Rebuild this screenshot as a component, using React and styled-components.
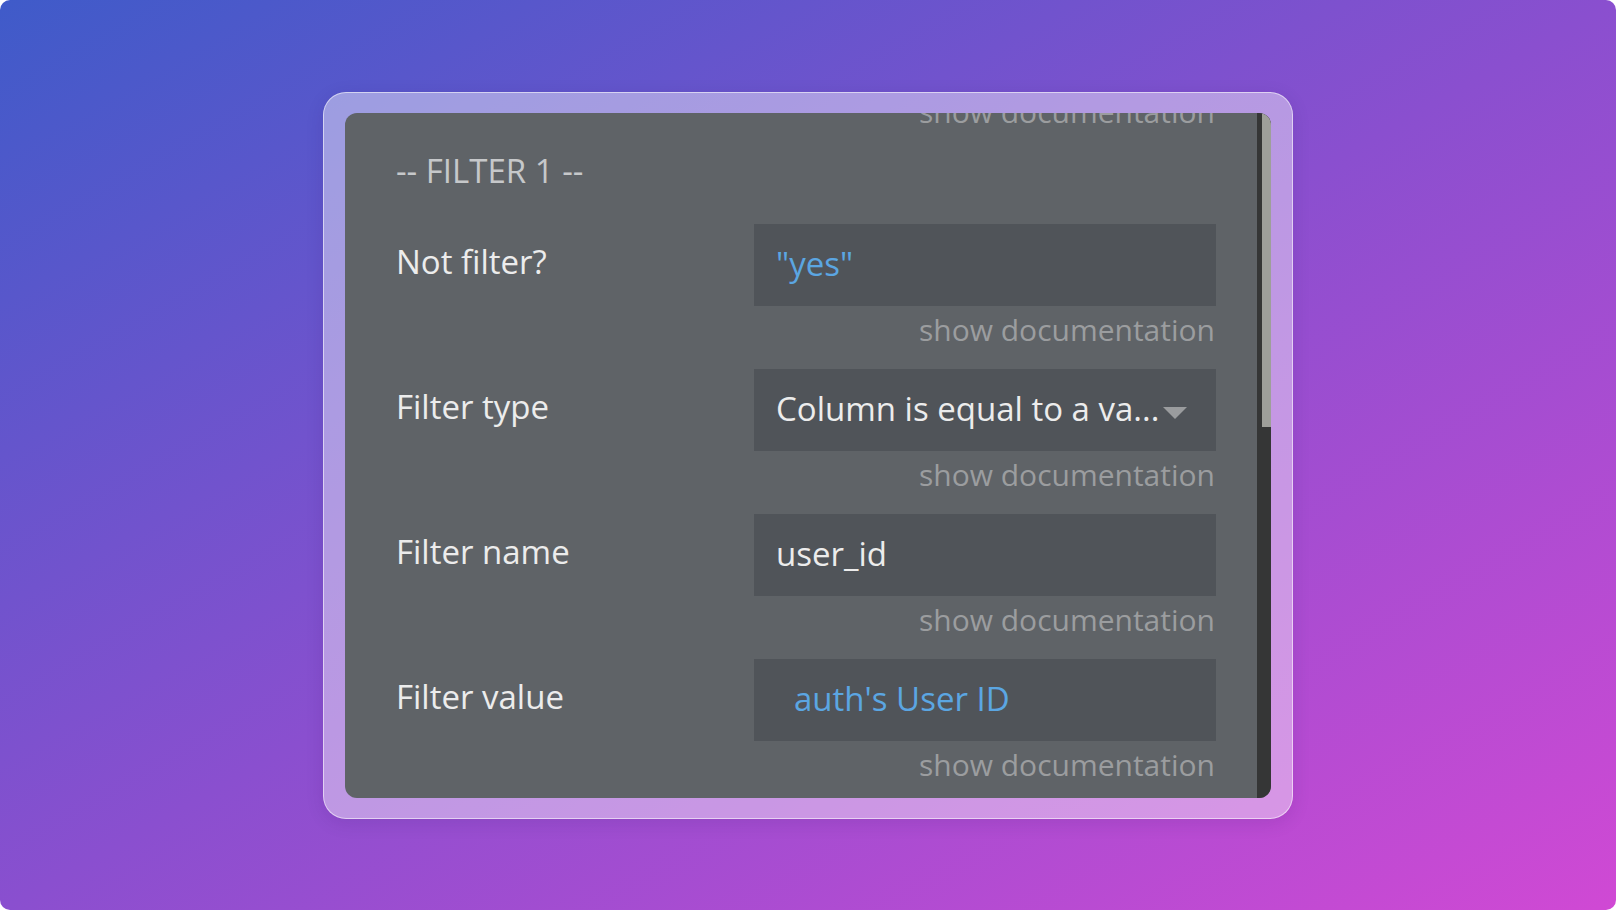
import React from 'react';
import styled, { createGlobalStyle } from 'styled-components';

const GlobalStyle = createGlobalStyle`
  html, body {
    margin: 0;
    padding: 0;
    background: #ffffff;
  }
  * { box-sizing: border-box; }
`;

const Page = styled.div`
  width: 1616px;
  height: 910px;
  border-radius: 10px;
  overflow: hidden;
  background: linear-gradient(to bottom right, #3f5bc9 0%, #8a4fcf 50%, #d049d4 100%);
  display: flex;
  align-items: center;
  justify-content: center;
  font-family: "Open Sans", "Liberation Sans", sans-serif;
`;

const Frame = styled.div`
  width: 970px;
  height: 727px;
  padding: 20px 21px 20px 21px;
  border-radius: 23px;
  background: rgba(255, 255, 255, 0.42);
  border: 1.5px solid rgba(255, 255, 255, 0.55);
  box-shadow: 0 4px 18px rgba(40, 20, 90, 0.12);
`;

const Panel = styled.div`
  width: 100%;
  height: 100%;
  border-radius: 12px;
  background: #5f6367;
  overflow: hidden;
  display: flex;
`;

const Content = styled.div`
  flex: 1;
  overflow: hidden;
  padding: 0 41px 0 51px;
`;

const Scroller = styled.div`
  margin-top: -25px;
`;

const Track = styled.div`
  width: 14px;
  height: 100%;
  background: #353636;
  display: flex;
  justify-content: flex-end;
`;

const Thumb = styled.div`
  width: 9px;
  height: 314px;
  background: #9e9f9a;
`;

const Header = styled.div`
  margin: 17px 0 31px;
  font-size: 33px;
  line-height: 44px;
  color: #c6c8ca;
`;

const Field = styled.div`
  margin-bottom: 19px;
`;

const Row = styled.div`
  display: flex;
  align-items: center;
  height: 82px;
`;

const Label = styled.div`
  width: 358px;
  padding-bottom: 6px;
  font-size: 33px;
  color: #ececec;
`;

const Box = styled.div`
  flex: 1;
  height: 82px;
  display: flex;
  align-items: center;
  padding-left: ${p => (p.$dynamic ? '40px' : '22px')};
  padding-right: 29px;
  padding-bottom: 2px;
  background: #505459;
  font-size: 33px;
  color: ${p => (p.$blue ? '#5ba6e2' : '#ececec')};
  white-space: nowrap;
`;

const Value = styled.span`
  flex: 1;
`;

const Caret = styled.svg`
  width: 24px;
  height: 12px;
  flex: none;
  margin-top: 8px;
`;

const Doc = styled.div`
  padding-top: 4px;
  text-align: right;
  font-size: 30px;
  line-height: 40px;
  color: #9b9d9f;
  padding-right: 1px;
`;

const fields = [
  { label: 'Not filter?', value: '"yes"', blue: true },
  { label: 'Filter type', value: 'Column is equal to a va...', select: true },
  { label: 'Filter name', value: 'user_id' },
  { label: 'Filter value', value: "auth's User ID", blue: true, dynamic: true },
];

const App = () => {
  return (
    <>
      <GlobalStyle />
      <Page>
        <Frame>
          <Panel>
            <Content>
              <Scroller>
                <Doc>show documentation</Doc>
                <Header>-- FILTER 1 --</Header>
                {fields.map(f => (
                  <Field key={f.label}>
                    <Row>
                      <Label>{f.label}</Label>
                      <Box $blue={f.blue} $dynamic={f.dynamic}>
                        <Value>{f.value}</Value>
                        {f.select && (
                          <Caret viewBox="0 0 24 12">
                            <path d="M0 0 L24 0 L12 12 Z" fill="#9a9c9e" />
                          </Caret>
                        )}
                      </Box>
                    </Row>
                    <Doc>show documentation</Doc>
                  </Field>
                ))}
              </Scroller>
            </Content>
            <Track>
              <Thumb />
            </Track>
          </Panel>
        </Frame>
      </Page>
    </>
  );
};

export default App;
